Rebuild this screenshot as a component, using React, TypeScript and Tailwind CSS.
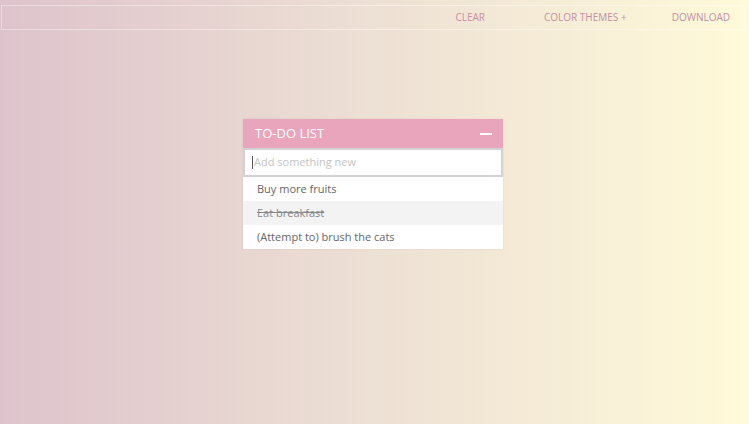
import React from "react";

export default function App() {
  const font = { fontFamily: '"Open Sans", "Noto Sans", sans-serif' };
  return (
    <div
      className="h-[424px] w-full overflow-hidden bg-gradient-to-r from-[#dec3cc] via-[#ede0d4] to-[#fffad9]"
      style={font}
    >
      <nav className="ml-[1px] mt-[5px] flex h-[25px] w-[744px] items-center justify-end border border-white/40 pr-[14px] text-[10px] text-[#c58ea6]">
        <span className="mr-[59px]">CLEAR</span>
        <span className="mr-[45px]">COLOR THEMES +</span>
        <span>DOWNLOAD</span>
      </nav>

      <div className="ml-[243px] mt-[89px] w-[260px] bg-white shadow-[0_0_2px_rgba(0,0,0,0.08)]">
        <div className="flex h-[29px] items-center justify-between bg-[#e8a5bb] pl-[12px] pr-[11px]">
          <span className="text-[13px] text-white">TO-DO LIST</span>
          <span className="block h-[2px] w-[12px] bg-white" />
        </div>
        <div className="flex h-[29px] items-center border-2 border-[#d2d2d2] bg-white pl-[7px]">
          <span className="mr-[1px] inline-block h-[13px] w-[1px] bg-[#555]" />
          <span className="text-[11px] text-[#c4c4c4]">Add something new</span>
        </div>
        <div className="flex h-[24px] items-center pl-[14px] text-[11px] text-[#666]">
          Buy more fruits
        </div>
        <div className="flex h-[24px] items-center bg-[#f3f3f3] pl-[14px] text-[11px] text-[#888] line-through">
          Eat breakfast
        </div>
        <div className="flex h-[24px] items-center pl-[14px] text-[11px] text-[#666]">
          (Attempt to) brush the cats
        </div>
      </div>
    </div>
  );
}
